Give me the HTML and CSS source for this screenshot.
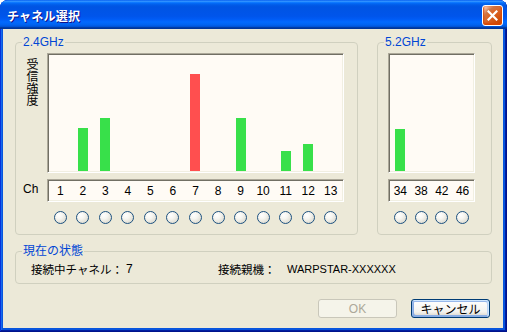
FILE: index.html
```html
<!DOCTYPE html>
<html lang="ja">
<head>
    <meta charset="UTF-8">
    <title>チャネル選択</title>
    <link rel="stylesheet" href="styles.css">
</head>
<body>
    <div class="window">
        <div class="titlebar">
            <span class="title">チャネル選択</span>
            <button class="close" aria-label="閉じる">
                <svg width="11" height="11" viewBox="0 0 11 11">
                    <path d="M1.5 1.5 L9.5 9.5 M9.5 1.5 L1.5 9.5" stroke="#fff" stroke-width="2.2" stroke-linecap="square"/>
                </svg>
            </button>
        </div>

        <div class="client">
            <div class="bands">
                <fieldset class="group band24">
                    <legend>2.4GHz</legend>
                    <div class="inner">
                        <div class="row">
                            <div class="axis"><span class="vlabel">受信強度</span></div>
                            <div class="chart">
                                <div class="cell"></div>
                                <div class="cell"><div class="bar" style="height: 43px"></div></div>
                                <div class="cell"><div class="bar" style="height: 53px"></div></div>
                                <div class="cell"></div>
                                <div class="cell"></div>
                                <div class="cell"></div>
                                <div class="cell"><div class="bar red" style="height: 97px"></div></div>
                                <div class="cell"></div>
                                <div class="cell"><div class="bar" style="height: 53px"></div></div>
                                <div class="cell"></div>
                                <div class="cell"><div class="bar" style="height: 20px"></div></div>
                                <div class="cell"><div class="bar" style="height: 27px"></div></div>
                                <div class="cell"></div>
                            </div>
                        </div>
                        <div class="row ch-row">
                            <div class="axis"><span class="ch-label">Ch</span></div>
                            <div class="chbox">
                                <span>1</span><span>2</span><span>3</span><span>4</span><span>5</span>
                                <span>6</span><span>7</span><span>8</span><span>9</span><span>10</span>
                                <span>11</span><span>12</span><span>13</span>
                            </div>
                        </div>
                        <div class="row">
                            <div class="axis"></div>
                            <div class="radios">
                                <span class="radio"></span><span class="radio"></span><span class="radio"></span>
                                <span class="radio"></span><span class="radio"></span><span class="radio"></span>
                                <span class="radio"></span><span class="radio"></span><span class="radio"></span>
                                <span class="radio"></span><span class="radio"></span><span class="radio"></span>
                                <span class="radio"></span>
                            </div>
                        </div>
                    </div>
                </fieldset>

                <fieldset class="group band52">
                    <legend>5.2GHz</legend>
                    <div class="inner">
                        <div class="chart">
                            <div class="cell"><div class="bar" style="height: 42px"></div></div>
                            <div class="cell"></div>
                            <div class="cell"></div>
                            <div class="cell"></div>
                        </div>
                        <div class="row ch-row">
                            <div class="chbox">
                                <span>34</span><span>38</span><span>42</span><span>46</span>
                            </div>
                        </div>
                        <div class="radios">
                            <span class="radio"></span><span class="radio"></span>
                            <span class="radio"></span><span class="radio"></span>
                        </div>
                    </div>
                </fieldset>
            </div>

            <fieldset class="group status">
                <legend>現在の状態</legend>
                <div class="inner">
                    <span class="k1">接続中チャネル：</span>
                    <span class="v1">7</span>
                    <span class="k2">接続親機：</span>
                    <span class="v2">WARPSTAR-XXXXXX</span>
                </div>
            </fieldset>

            <div class="buttons">
                <button class="btn" disabled>OK</button>
                <button class="btn default">キャンセル</button>
            </div>
        </div>
    </div>
</body>
</html>
```

FILE: styles.css
```css
* {
    margin: 0;
    padding: 0;
    box-sizing: border-box;
}

body {
    font-family: "Liberation Sans", "Noto Sans CJK JP", sans-serif;
    font-size: 12px;
    color: #000;
    background: #fff;
}

.window {
    width: 507px;
    height: 332px;
    display: flex;
    flex-direction: column;
    background: #0855dd;
    border-radius: 8px 8px 0 0;
    overflow: hidden;
    box-shadow: inset -1px -1px #00138c, inset 1px 1px #0831d9, inset -2px -2px #001ea0, inset 2px 2px #166aee;
}

/* title bar */
.titlebar {
    height: 29px;
    flex: none;
    display: flex;
    align-items: center;
    padding: 1px 4px 0 7px;
    background: linear-gradient(to bottom, #0058ee 0%, #3593ff 4%, #288eff 6%, #127dff 8%, #036ffc 10%,
        #0262ee 14%, #0057e5 20%, #0054e3 24%, #0055eb 56%, #005bf5 66%, #026afe 76%,
        #0062ef 86%, #0052d6 92%, #0040ab 94%, #003092 100%);
}

.title {
    color: #fff;
    font-family: "Noto Sans CJK JP", sans-serif;
    font-weight: bold;
    font-size: 12px;
    letter-spacing: 0.2px;
    text-shadow: 1px 1px #0f1089;
}

.close {
    margin-left: auto;
    width: 21px;
    height: 21px;
    display: flex;
    align-items: center;
    justify-content: center;
    border: 1px solid #fff;
    border-radius: 3px;
    background: radial-gradient(circle at 90% 90%, #cc4600 0%, #dc6527 55%, #cd7546 70%, #ffccb2 90%, #fff 100%);
    box-shadow: inset 0 -1px 2px 1px #da4600;
}

/* client area */
.client {
    flex: 1;
    margin: 0 4px 4px 3px;
    padding: 6px 11px 0 12px;
    background: #ece9d8;
    display: flex;
    flex-direction: column;
}

.bands {
    display: flex;
    gap: 19px;
}

.group {
    border: 1px solid #d0d0bf;
    border-radius: 4px;
    min-width: 0;
}

.group legend {
    color: #0046d5;
    margin-left: 6px;
    padding: 0 1px;
    line-height: 14px;
}

.band24 {
    width: 343px;
}

.band24 .inner {
    padding: 4px 13px 10px 7px;
}

.band52 {
    width: 115px;
}

.band52 .inner {
    padding: 4px 16px 10px 10px;
}

.row {
    display: flex;
}

.axis {
    width: 24px;
    flex: none;
}

.vlabel {
    display: block;
    writing-mode: vertical-rl;
    text-orientation: upright;
    margin: 5px 0 0 3px;
    line-height: 12px;
    font-family: "Noto Sans CJK JP", sans-serif;
}

.chart {
    width: 297px;
    height: 120px;
    padding: 1px;
    display: grid;
    grid-template-columns: repeat(13, 1fr);
    background: #fffbf5;
    border: 1px solid;
    border-color: #aca899 #fff #fff #aca899;
    box-shadow: inset 1px 1px #716f64, inset -1px -1px #f1efe2;
}

.band52 .chart {
    width: 87px;
    grid-template-columns: repeat(4, 1fr);
}

.cell {
    display: flex;
    justify-content: center;
    align-items: flex-end;
}

.bar {
    width: 10px;
    background: #38e04a;
}

.bar.red {
    background: #ff4f4f;
}

.ch-row {
    margin-top: 6px;
    align-items: center;
}

.ch-label {
    display: block;
    padding-bottom: 3px;
}

.chbox {
    width: 297px;
    height: 23px;
    padding: 1px;
    display: grid;
    grid-template-columns: repeat(13, 1fr);
    align-items: center;
    text-align: center;
    background: #fffbf5;
    border: 1px solid;
    border-color: #aca899 #fff #fff #aca899;
    box-shadow: inset 1px 1px #716f64, inset -1px -1px #f1efe2;
}

.band52 .chbox {
    width: 87px;
    grid-template-columns: repeat(4, 1fr);
}

.radios {
    width: 297px;
    margin-top: 9px;
    padding: 0 2px;
    display: grid;
    grid-template-columns: repeat(13, 1fr);
    justify-items: center;
}

.band52 .radios {
    width: 87px;
    grid-template-columns: repeat(4, 1fr);
}

.radio {
    width: 13px;
    height: 13px;
    border-radius: 50%;
    border: 1px solid #1c5180;
    background: radial-gradient(circle at 35% 30%, #fff 0%, #f6f5f0 35%, #d2d0c3 100%);
}

/* status */
.status {
    margin-top: 9px;
}

.status .inner {
    display: flex;
    padding: 4px 8px 7px 15px;
    line-height: 14px;
}

.k1 {
    width: 95px;
    font-family: "Noto Sans CJK JP", sans-serif;
    font-size: 11.5px;
}

.v1 {
    width: 92px;
}

.k2 {
    width: 69px;
    font-family: "Noto Sans CJK JP", sans-serif;
    font-size: 11.5px;
}

.v2 {
    font-size: 11px;
}

/* buttons */
.buttons {
    display: flex;
    justify-content: flex-end;
    gap: 14px;
    margin-top: 15px;
    padding-right: 2px;
}

.btn {
    width: 79px;
    height: 19px;
    font-family: "Liberation Sans", "Noto Sans CJK JP", sans-serif;
    font-size: 12px;
    border-radius: 3px;
    border: 1px solid #003c74;
    color: #000;
    background: linear-gradient(to bottom, #fff 0%, #f3f3ef 70%, #d6d0c5 100%);
}

.btn:disabled {
    border-color: #c9c7ba;
    background: #f5f4ea;
    color: #aca899;
}

.btn.default {
    box-shadow: inset -1px 1px #cee7ff, inset 1px 2px #98b8ea, inset -2px 2px #bcd4f6, inset 1px -1px #89ade4, inset 2px -2px #89ade4;
}
```
